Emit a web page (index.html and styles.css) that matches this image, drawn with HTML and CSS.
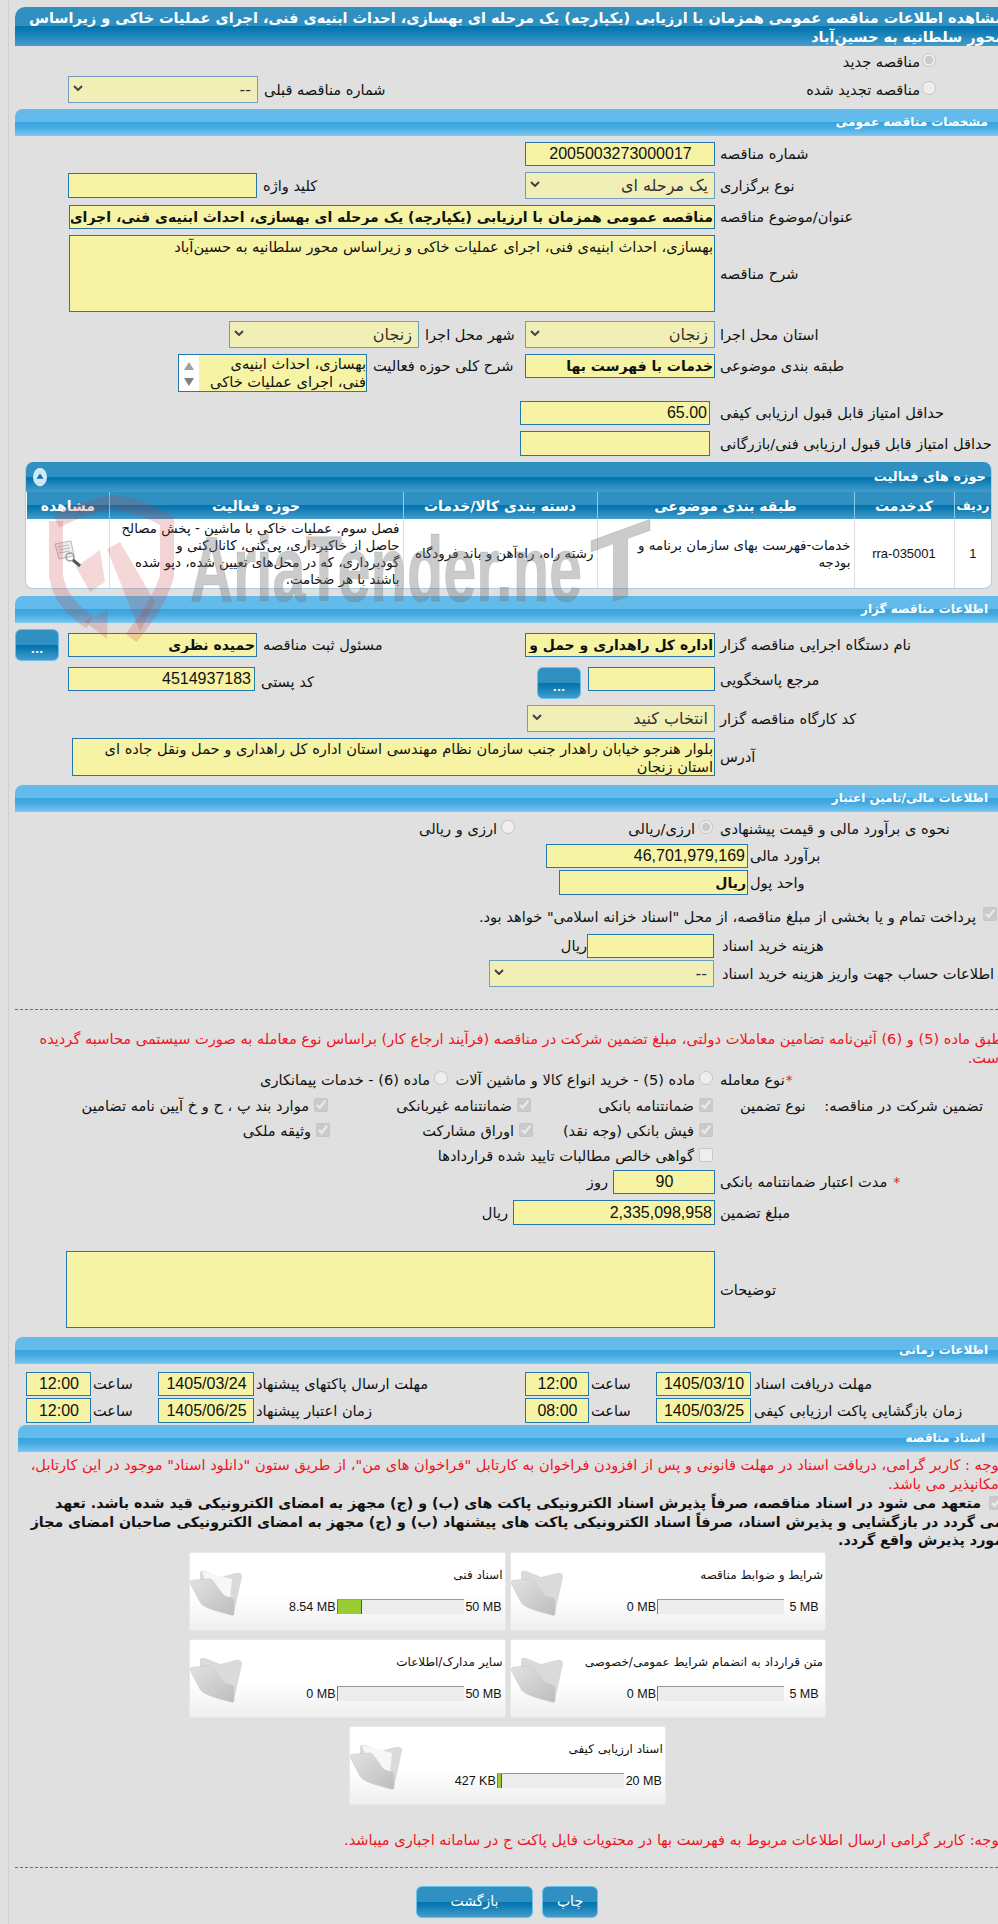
FILE: index.html
```html
<!DOCTYPE html>
<html lang="fa" dir="rtl">
<head>
<meta charset="utf-8">
<title>مشاهده اطلاعات مناقصه</title>
<link rel="stylesheet" href="styles.css">
</head>
<body>
<div class="rail"></div>
<main class="page">
  <h1 class="title">مشاهده اطلاعات مناقصه عمومی همزمان با ارزیابی (یکپارچه) یک مرحله ای بهسازی، احداث ابنیه‌ی فنی، اجرای عملیات خاکی و زیراساس محور سلطانیه به حسین‌آباد</h1>

  <div class="row h20 mt6 radio-row"><input class="rd" type="radio" name="a" checked disabled><span>مناقصه جدید</span></div>
  <div class="row h27 mt4 radio-row"><input class="rd up" type="radio" name="a" disabled><span>مناقصه تجدید شده</span>
    <div class="pair ml53"><span class="t2">شماره مناقصه قبلی</span><div class="sel w190"><select disabled><option>--</option></select><svg viewBox="0 0 10 6"><path d="M1 1l4 4 4-4" fill="none" stroke="#444" stroke-width="2"/></svg></div></div>
  </div>

  <h2 class="sec mt6">مشخصات مناقصه عمومی</h2>
  <div class="row mt6"><label class="lab">شماره مناقصه</label><input class="in w190 h24 num ctr" value="2005003273000017" readonly></div>
  <div class="row mt6 h27"><label class="lab">نوع برگزاری</label><div class="sel w190"><select disabled><option>یک مرحله ای</option></select><svg viewBox="0 0 10 6"><path d="M1 1l4 4 4-4" fill="none" stroke="#444" stroke-width="2"/></svg></div>
    <div class="pair ml53"><span class="t2">کلید واژه</span><input class="in w189 h25" readonly></div></div>
  <div class="row mt6"><label class="lab">عنوان/موضوع مناقصه</label><input class="in w646 h24 strong" value="مناقصه عمومی همزمان با ارزیابی (یکپارچه) یک مرحله ای بهسازی، احداث ابنیه‌ی فنی، اجرای عملیات خاکی و زیراساس محور سلطانیه به حسین‌آباد" readonly></div>
  <div class="row mt6 h77"><label class="lab">شرح مناقصه</label><textarea class="in w646 h77 ta" readonly>بهسازی، احداث ابنیه‌ی فنی، اجرای عملیات خاکی و زیراساس محور سلطانیه به حسین‌آباد</textarea></div>
  <div class="row mt9 h27"><label class="lab">استان محل اجرا</label><div class="sel w190"><select disabled><option>زنجان</option></select><svg viewBox="0 0 10 6"><path d="M1 1l4 4 4-4" fill="none" stroke="#444" stroke-width="2"/></svg></div>
    <div class="pair ml214"><span class="t2">شهر محل اجرا</span><div class="sel w190"><select disabled><option>زنجان</option></select><svg viewBox="0 0 10 6"><path d="M1 1l4 4 4-4" fill="none" stroke="#444" stroke-width="2"/></svg></div></div></div>
  <div class="row mt6 h38 top"><label class="lab lab-top">طبقه بندی موضوعی</label><input class="in w190 h24 strong" value="خدمات با فهرست بها" readonly>
    <div class="pair ml163 top"><span class="t2 lab-top">شرح کلی حوزه فعالیت</span>
      <div class="list"><div class="list-text">بهسازی، احداث ابنیه‌ی فنی، اجرای عملیات خاکی و زیراساس محور سلطانیه</div><div class="list-bar"><svg viewBox="0 0 10 8"><path d="M5 0l5 8H0z" fill="#a0a0a0"/></svg><svg viewBox="0 0 10 8"><path d="M5 8L0 0h10z" fill="#808080"/></svg></div></div></div></div>
  <div class="row mt9"><label class="lab lab-q">حداقل امتیاز قابل قبول ارزیابی کیفی</label><input class="in w190 h24 num" value="65.00" readonly></div>
  <div class="row mt6"><label class="lab lab-q">حداقل امتیاز قابل قبول ارزیابی فنی/بازرگانی</label><input class="in w190 h25" readonly></div>

  <section class="panel">
    <div class="panel-head"><span>حوزه های فعالیت</span><svg class="collapse" viewBox="0 0 16 22"><ellipse cx="8" cy="11" rx="8" ry="10.5" fill="#cfe6f3"/><path d="M8 7l4 6H4z" fill="#0a6ea8"/></svg></div>
    <table class="grid">
      <colgroup><col class="c37"><col class="c100"><col class="c257"><col class="c194"><col class="c294"><col class="c82"></colgroup>
      <thead><tr><th class="th-sm">ردیف</th><th>کدخدمت</th><th>طبقه بندی موضوعی</th><th>دسته بندی کالا/خدمات</th><th>حوزه فعالیت</th><th>مشاهده</th></tr></thead>
      <tbody><tr>
        <td class="ctr lat">1</td>
        <td class="ctr lat">rra-035001</td>
        <td class="td-wrap">خدمات-فهرست بهای سازمان برنامه و بودجه</td>
        <td>رشته راه، راه‌آهن و باند فرودگاه</td>
        <td>فصل سوم. عملیات خاکی با ماشین - پخش مصالح حاصل از خاکبرداری، پی‌کنی، کانال‌کنی و گودبرداری، که در محل‌های تعیین شده، دپو شده باشند با هر ضخامت.</td>
        <td class="ctr"><svg class="view" viewBox="0 0 30 28"><path d="M2 4l16-3 3 15-15 3z" fill="#eee" stroke="#bbb"/><path d="M5 7l11-2M6 10l11-2M6 13l11-2" stroke="#bbb"/><circle cx="17" cy="17" r="4" fill="none" stroke="#999" stroke-width="1.5"/><path d="M20 20l7 6" stroke="#555" stroke-width="3"/></svg></td>
      </tr></tbody>
    </table>
  </section>

  <h2 class="sec mt7">اطلاعات مناقصه گزار</h2>
  <div class="row mt6 h32"><label class="lab">نام دستگاه اجرایی مناقصه گزار</label><input class="in w190 h24 strong" value="اداره کل راهداری و حمل و نقل جاده ای استان زنجان" readonly>
    <div class="pair ml0"><span class="t2">مسئول ثبت مناقصه</span><input class="in w189 h24 strong" value="حمیده نظری" readonly><button class="dots mr9" type="button">...</button></div></div>
  <div class="row mt6 h32 top"><label class="lab lab-r">مرجع پاسخگویی</label><input class="in w127 h24 m1" readonly><button class="dots mr7" type="button">...</button>
    <div class="pair ml53 top"><span class="t2 lab-p">کد پستی</span><input class="in w187 h24 num-s m4" value="4514937183" readonly></div></div>
  <div class="row mt6 h27"><label class="lab">کد کارگاه مناقصه گزار</label><div class="sel w188"><select disabled><option>انتخاب کنید</option></select><svg viewBox="0 0 10 6"><path d="M1 1l4 4 4-4" fill="none" stroke="#444" stroke-width="2"/></svg></div></div>
  <div class="row mt6 h38"><label class="lab">آدرس</label><textarea class="in w643 h38 ta2" readonly>بلوار هنرجو خیابان راهدار جنب سازمان نظام مهندسی استان اداره کل راهداری و حمل ونقل جاده ای استان زنجان</textarea></div>

  <h2 class="sec mt9">اطلاعات مالی/تامین اعتبار</h2>
  <div class="row mt8 h18"><label class="lab lab-w">نحوه ی برآورد مالی و قیمت پیشنهادی</label><input class="rd" type="radio" name="b" checked disabled><span class="t3">ارزی/ریالی</span>
    <div class="pair ml404"><input class="rd" type="radio" name="b" disabled><span class="t3">ارزی و ریالی</span></div></div>
  <div class="row mt6"><label class="lab lab-m">برآورد مالی</label><input class="in w202 h24 num" value="46,701,979,169" readonly></div>
  <div class="row mt2"><label class="lab lab-m">واحد پول</label><input class="in w189 h25 strong" value="ریال" readonly></div>
  <div class="row mt13 h18 chk-line"><input class="cb" type="checkbox" checked disabled><span>پرداخت تمام و یا بخشی از مبلغ مناقصه، از محل "اسناد خزانه اسلامی" خواهد بود.</span></div>
  <div class="row mt8"><label class="lab lab-h">هزینه خرید اسناد</label><input class="in w127 h24" readonly><span class="unit0">ریال</span></div>
  <div class="row mt2 h27"><label class="lab lab-h nowrap">اطلاعات حساب جهت واریز هزینه خرید اسناد</label><div class="sel w225"><select disabled><option>--</option></select><svg viewBox="0 0 10 6"><path d="M1 1l4 4 4-4" fill="none" stroke="#444" stroke-width="2"/></svg></div></div>

  <hr class="dash mt22">
  <p class="red mt19">طبق ماده (5) و (6) آئین‌نامه تضامین معاملات دولتی، مبلغ تضمین شرکت در مناقصه (فرآیند ارجاع کار) براساس نوع معامله به صورت سیستمی محاسبه گردیده است.</p>
  <div class="row mt4 h18"><label class="lab lab-w"><span class="star">*</span>نوع معامله</label><input class="rd" type="radio" name="c" disabled><span class="t3">ماده (5) - خرید انواع کالا و ماشین آلات</span>
    <div class="pair ml245"><input class="rd" type="radio" name="c" disabled><span class="t3">ماده (6) - خدمات پیمانکاری</span></div></div>
  <div class="row mt8 h18"><div class="lab lab-w g-a"><span>تضمین شرکت در مناقصه:</span><span>نوع تضمین</span></div>
    <div class="c1"><input class="cb" type="checkbox" checked disabled><span>ضمانتنامه بانکی</span></div>
    <div class="c2"><input class="cb" type="checkbox" checked disabled><span>ضمانتنامه غیربانکی</span></div>
    <div class="c3"><input class="cb" type="checkbox" checked disabled><span>موارد بند پ ، ح و خ آیین نامه تضامین</span></div></div>
  <div class="row mt7 h18"><div class="lab lab-w"></div>
    <div class="c1 c1b"><input class="cb" type="checkbox" checked disabled><span>فیش بانکی (وجه نقد)</span></div>
    <div class="c2"><input class="cb" type="checkbox" checked disabled><span>اوراق مشارکت</span></div>
    <div class="c3"><input class="cb" type="checkbox" checked disabled><span>وثیقه ملکی</span></div></div>
  <div class="row mt7 h18"><div class="lab lab-w"></div>
    <div class="c1 wide"><input class="cb" type="checkbox" disabled><span>گواهی خالص مطالبات تایید شده قراردادها</span></div></div>
  <div class="row mt5"><label class="lab"><span class="star s2">*</span>مدت اعتبار ضمانتنامه بانکی</label><input class="in w102 h24 num ctr" value="90" readonly><span class="unit">روز</span></div>
  <div class="row mt6"><label class="lab">مبلغ تضمین</label><input class="in w202 h25 num" value="2,335,098,958" readonly><span class="unit">ریال</span></div>
  <div class="row mt26 h77"><label class="lab">توضیحات</label><textarea class="in w649 h77" readonly></textarea></div>

  <h2 class="sec mt9">اطلاعات زمانی</h2>
  <div class="row mt8"><label class="lab lab-t">مهلت دریافت اسناد</label><input class="in w95 h24 num date" value="1405/03/10" readonly><span class="sa">ساعت</span><input class="in w64 h24 num ctr" value="12:00" readonly>
    <div class="pair ml11"><span class="lab2">مهلت ارسال پاکتهای پیشنهاد</span><input class="in w96 h24 num date" value="1405/03/24" readonly><span class="sa">ساعت</span><input class="in w65 h24 num ctr" value="12:00" readonly></div></div>
  <div class="row mt2"><label class="lab lab-t">زمان بازگشایی پاکت ارزیابی کیفی</label><input class="in w95 h25 num date" value="1405/03/25" readonly><span class="sa">ساعت</span><input class="in w64 h25 num ctr" value="08:00" readonly>
    <div class="pair ml11"><span class="lab2">زمان اعتبار پیشنهاد</span><input class="in w96 h25 num date" value="1405/06/25" readonly><span class="sa">ساعت</span><input class="in w65 h25 num ctr" value="12:00" readonly></div></div>

  <h2 class="sec sec-docs mt2">اسناد مناقصه</h2>
  <p class="red red-docs mt3">توجه : کاربر گرامی، دریافت اسناد در مهلت قانونی و پس از افزودن فراخوان به کارتابل "فراخوان های من"، از طریق ستون "دانلود اسناد" موجود در این کارتابل، امکانپذیر می باشد.</p>
  <p class="pledge"><input class="cb" type="checkbox" checked disabled> متعهد می شود در اسناد مناقصه، صرفاً پذیرش اسناد الکترونیکی پاکت های (ب) و (ج) مجهز به امضای الکترونیکی قید شده باشد. تعهد<br>می گردد در بازگشایی و پذیرش اسناد، صرفاً اسناد الکترونیکی پاکت های پیشنهاد (ب) و (ج) مجهز به امضای الکترونیکی صاحبان امضای مجاز<br>مورد پذیرش واقع گردد.</p>

  <div class="cards">
    <article class="card"><div class="card-main"><div class="card-title">شرایط و ضوابط مناقصه</div><div class="meter"><span class="max">5 MB</span><div class="bar"></div><span class="cur">0 MB</span></div></div><svg class="folder" viewBox="0 0 54 48"><defs><linearGradient id="fg" x1="0" y1="0" x2="1" y2="1"><stop offset="0" stop-color="#e2e2e2"/><stop offset="1" stop-color="#bdbdbd"/></linearGradient></defs><path class="f-back" d="M10 3Q12 1 15 2L30 8 46 4Q52 3 52 8L44 44 10 22Z"/><path class="f-front" d="M0 14Q0 11 4 11L20 10Q22 10 24 13L34 27 42 29Q44 30 44 33L44 45Q44 47 41 46L30 43Q12 38 10 33Z"/></svg></article>
    <article class="card"><div class="card-main"><div class="card-title">اسناد فنی</div><div class="meter"><span class="max">50 MB</span><div class="bar"><i class="fill f-a"></i></div><span class="cur">8.54 MB</span></div></div><svg class="folder" viewBox="0 0 54 48"><path class="f-back" d="M10 3Q12 1 15 2L30 8 46 4Q52 3 52 8L44 44 10 22Z"/><path class="f-paper" d="M12 2L42 10 40 30 16 14Z"/><path class="f-front" d="M0 14Q0 11 4 11L20 10Q22 10 24 13L34 27 42 29Q44 30 44 33L44 45Q44 47 41 46L30 43Q12 38 10 33Z"/></svg></article>
    <article class="card"><div class="card-main"><div class="card-title">متن قرارداد به انضمام شرایط عمومی/خصوصی</div><div class="meter"><span class="max">5 MB</span><div class="bar"></div><span class="cur">0 MB</span></div></div><svg class="folder" viewBox="0 0 54 48"><path class="f-back" d="M10 3Q12 1 15 2L30 8 46 4Q52 3 52 8L44 44 10 22Z"/><path class="f-front" d="M0 14Q0 11 4 11L20 10Q22 10 24 13L34 27 42 29Q44 30 44 33L44 45Q44 47 41 46L30 43Q12 38 10 33Z"/></svg></article>
    <article class="card"><div class="card-main"><div class="card-title">سایر مدارک/اطلاعات</div><div class="meter"><span class="max">50 MB</span><div class="bar"></div><span class="cur">0 MB</span></div></div><svg class="folder" viewBox="0 0 54 48"><path class="f-back" d="M10 3Q12 1 15 2L30 8 46 4Q52 3 52 8L44 44 10 22Z"/><path class="f-front" d="M0 14Q0 11 4 11L20 10Q22 10 24 13L34 27 42 29Q44 30 44 33L44 45Q44 47 41 46L30 43Q12 38 10 33Z"/></svg></article>
    <article class="card"><div class="card-main"><div class="card-title">اسناد ارزیابی کیفی</div><div class="meter"><span class="max">20 MB</span><div class="bar"><i class="fill f-b"></i></div><span class="cur">427 KB</span></div></div><svg class="folder" viewBox="0 0 54 48"><path class="f-back" d="M10 3Q12 1 15 2L30 8 46 4Q52 3 52 8L44 44 10 22Z"/><path class="f-paper" d="M12 2L42 10 40 30 16 14Z"/><path class="f-front" d="M0 14Q0 11 4 11L20 10Q22 10 24 13L34 27 42 29Q44 30 44 33L44 45Q44 47 41 46L30 43Q12 38 10 33Z"/></svg></article>
  </div>

  <p class="red note">توجه: کاربر گرامی ارسال اطلاعات مربوط به فهرست بها در محتویات فایل پاکت ج در سامانه اجباری میباشد.</p>
  <hr class="dash mt18">
  <div class="actions"><button class="act a-print" type="button">چاپ</button><button class="act a-back" type="button">بازگشت</button></div>
</main>

<svg class="mark" viewBox="0 0 700 160" aria-hidden="true">
  <g fill="none" stroke="#c83c3c" stroke-opacity=".22" stroke-width="14"><path d="M56 26C80 14 96 10 113 7c20 3 36 8 54 19v55c-6 22-20 42-36 62"/><path d="M56 26v55c3 18 14 34 34 46"/></g>
  <path d="M84 126l24-10-1 28z" fill="#c83c3c" fill-opacity=".22"/>
  <path d="M76 72l24-17 5 32-15 10zM107 54l13-7 35 60-15 30z" fill="#c83c3c" fill-opacity=".2"/>
  <text class="mark-text" x="190" y="106" textLength="392" lengthAdjust="spacingAndGlyphs">AriaTender.ne</text>
  <text class="mark-text mark-t" transform="translate(590 115) skewY(-20)">T</text>
</svg>
</body>
</html>
```
FILE: styles.css
```css
*{box-sizing:border-box}
html,body{margin:0;padding:0}
body{width:998px;overflow-x:hidden;background:#e0e0e0;color:#111;font:14.6px/18px "DejaVu Sans",sans-serif;position:relative;padding-top:7px;height:1924px;overflow-y:hidden}
.rail{position:absolute;left:8px;top:0;bottom:0;width:1px;background:#cfcfcf}
.page{width:983px;margin-left:15px;direction:rtl}
h1,h2,p{margin:0;font-weight:normal}
.title{height:39px;margin-right:-6px;padding:2px 0 0 10px;border-top-left-radius:10px;color:#fff;font:bold 14.45px/19px "DejaVu Sans",sans-serif;background:linear-gradient(#2f90c1 0,#2f90c1 50%,#0274ae 50%,#0b7ab2 60%,#449ccb 100%)}
.sec{height:27px;padding-right:10px;border-top-left-radius:8px;color:#fff;font:bold 12px/27px "DejaVu Sans",sans-serif;background:linear-gradient(#62bbea 0,#62bbea 48%,#38a3dd 50%,#45a9e0 70%,#72c4ee 100%);border-bottom:1px solid #7ccaf0}
.sec-docs{margin-left:3px;padding-right:13px}
.row{display:flex;align-items:center;direction:rtl}
.row.top,.pair.top{align-items:flex-start}
.pair{display:flex;align-items:center;margin-right:auto}
.mt2{margin-top:2px}.mt3{margin-top:3px}.mt4{margin-top:4px}.mt5{margin-top:5px}.mt6{margin-top:6px}.mt7{margin-top:7px}.mt8{margin-top:8px}.mt9{margin-top:9px}.mt13{margin-top:13px}.mt18{margin-top:18px}.mt19{margin-top:19px}.mt22{margin-top:22px}.mt26{margin-top:26px}
.m1{margin-top:1px}.m4{margin-top:4px}
.mr7{margin-right:7px}.mr9{margin-right:9px}
.ml0{margin-left:0}.ml11{margin-left:11px}.ml53{margin-left:53px}.ml163{margin-left:163px}.ml214{margin-left:214px}.ml245{margin-left:245px}.ml404{margin-left:404px}
.h18{height:18px}.h20{height:20px}.h24{height:24px}.h25{height:25px}.h27{height:27px}.h32{height:32px}.h38{height:38px}.h77{height:77px}
.w64{width:64px}.w65{width:65px}.w95{width:95px}.w96{width:96px}.w102{width:102px}.w127{width:127px}.w187{width:187px}.w188{width:188px}.w189{width:189px}.w190{width:190px}.w202{width:202px}.w225{width:225px}.w643{width:643px}.w646{width:646px}.w649{width:649px}
.lab{flex:0 0 278px;margin-left:5px;text-align:left;white-space:nowrap}
.lab-top{margin-top:3px}
.lab-r{margin-top:4px}.lab-p{margin-top:6px}
.lab-q{margin-left:10px}
.lab-w{margin-left:7px}
.lab-m{flex-basis:248px;margin-left:2px}
.lab-h{flex-basis:276px;margin-left:8px}
.lab-t{flex-basis:244px;margin-left:3px}
.lab2{margin-left:2px;white-space:nowrap}
.t2{margin-left:6px;white-space:nowrap}
.t3{margin-right:4px;white-space:nowrap}
.radio-row>span{margin-right:2px}
.radio-row>.rd{margin-right:62px}
.rd{flex:none;width:14px;height:14px;margin:-4px 0 0}
.rd.up{margin-top:-3px}
.cb{flex:none;width:14px;height:14px;margin:-3px 0 0 5px}
.in{display:block;flex:none;margin:0;padding:0 1px;border:1px solid #2478ae;border-radius:0;background:#f6f4a4;color:#111;font:14.6px/22px "DejaVu Sans",sans-serif;direction:rtl;outline:0}
.num{font:16px "Liberation Sans",sans-serif;text-align:right;direction:rtl;padding-left:3px;padding-right:2px}
.num-s{font:16px "Liberation Sans",sans-serif;padding-right:3px}
.date{text-align:center}
.ctr{text-align:center}
input.ctr{text-align:center}
.strong{font:bold 14px "DejaVu Sans",sans-serif}
.ta{font:14.6px/18px "DejaVu Sans",sans-serif;resize:none;padding:2px 1px;overflow:hidden}
.ta2{font:14.6px/18px "DejaVu Sans",sans-serif;resize:none;padding:1px;overflow:hidden}
textarea.in{resize:none;overflow:hidden}
.sel{position:relative;flex:none;height:27px}
.sel select{display:block;width:100%;height:100%;margin:0;padding:0 6px 0 20px;border:1px solid #6d9fc0;border-radius:0;appearance:none;-webkit-appearance:none;background:#f1efb6;color:#333;opacity:1;font:16px "DejaVu Sans",sans-serif;direction:rtl}
.sel svg{position:absolute;left:5px;top:9px;width:10px;height:6px}
.list{flex:none;display:flex;width:189px;height:38px;border:1px solid #2478ae;background:#f6f4a4;overflow:hidden}
.list-text{flex:1;padding:0 0 0 2px;font:14.6px/18px "DejaVu Sans",sans-serif;overflow:hidden}
.list-bar{flex:none;width:20px;background:#fff;display:flex;flex-direction:column;justify-content:space-between;align-items:center;padding:7px 0 5px}
.list-bar svg{width:10px;height:8px}
.panel{width:967px;margin:6px 6px 0 10px;height:127px;border:1px solid #a9cfe4;border-top:0;border-radius:8px;background:#fff;overflow:hidden}
.panel-head{display:flex;align-items:center;justify-content:space-between;height:30px;padding:0 5px 0 7px;color:#fff;font:bold 13px/30px "DejaVu Sans",sans-serif;background:linear-gradient(#2f90c1 0,#2f90c1 50%,#0274ae 50%,#0b7ab2 60%,#449ccb 100%)}
.collapse{width:14px;height:20px}
.grid{width:964px;margin-left:3px;margin-right:0;border-collapse:collapse;table-layout:fixed;direction:rtl}
.c37{width:37px}.c100{width:100px}.c257{width:257px}.c194{width:194px}.c294{width:294px}.c82{width:82px}
.grid th{height:27px;padding:0;border-right:1px solid #8ccbea;color:#fff;font:bold 14px "DejaVu Sans",sans-serif;white-space:nowrap;background:linear-gradient(#2f90c1 0,#2f90c1 50%,#0274ae 50%,#0b7ab2 60%,#449ccb 100%)}
.grid th:first-child{border-right:0}
.grid th.th-sm{font-size:12.5px}
.grid td{height:69px;padding:0 3px;border-right:1px solid #ddd;font:13.4px/17px "DejaVu Sans",sans-serif;vertical-align:middle;text-align:right}
.grid td:first-child{border-right:0}
.grid td.ctr{text-align:center}
.grid td.lat{font:13px "Liberation Sans",sans-serif}
.grid td.td-wrap{padding-left:24px}
.view{display:block;margin:0 auto;width:30px;height:28px}
.dots{flex:none;width:44px;height:32px;padding:10px 0 0;border:1px solid #6cc0ea;border-radius:6px;color:#fff;font:bold 11px/16px "DejaVu Sans",sans-serif;background:linear-gradient(#2f90c1 0,#2f90c1 50%,#0274ae 50%,#0b7ab2 60%,#449ccb 100%)}
.chk-line{padding-right:1px}
.chk-line .cb{margin:-6px 0 0 7px}
.unit0{margin-left:0}
.unit{margin-right:5px}
.nowrap{white-space:nowrap}
.dash{height:0;margin-bottom:0;margin-left:0;margin-right:0;border:0;border-top:1px dashed #2e7fae}
.red{color:#f0141e;line-height:19px;margin-left:0;margin-right:-5px}
.star{color:#f0141e;font-size:14px;margin-left:1px}
.s2{margin-left:6px}
.g-a{display:flex;justify-content:space-between;padding:0 15px 0 20px;text-align:right}
.c1,.c2,.c3{display:flex;align-items:center;white-space:nowrap;flex:none}
.c1{width:182px}.c1b{width:180px}.c2{width:203px}.c3{width:auto}
.wide{width:auto}
.sa{flex:none;width:65px;text-align:left;margin-left:2px}
.pledge{margin:1px -5px 0 0;font:bold 14.2px/18.5px "DejaVu Sans",sans-serif;height:56px}
.pledge .cb{margin:0 0 0 3px;vertical-align:-2px}
.cards{display:flex;flex-wrap:wrap;justify-content:center;gap:8px 4px;width:637px;margin:2px 172px 0 0}
.card{display:flex;width:316.5px;height:79px;border:1px solid #e8e8e8;border-radius:2px;background:linear-gradient(#fff 0,#fff 55%,#efefef 100%)}
.card-main{flex:1;padding:0 1px 0 0}
.card-title{height:46px;padding:13px 1px 0 0;font-size:12px;line-height:18px;white-space:nowrap}
.meter{display:flex;align-items:center;height:15px;font:12.5px "Liberation Sans",sans-serif}
.max{flex:none;width:40px;text-align:center;direction:ltr}
.bar{flex:none;position:relative;width:127px;height:15px;background:#ececec;border-top:1px solid #999}
.bar::after{content:"";position:absolute;left:0;top:0;bottom:0;width:1px;background:#777}
.fill{position:absolute;left:0;top:0;bottom:0;background:#9acd32;border-right:1px solid #555}
.f-a{width:25px}.f-b{width:5px}
.cur{flex:none;margin-right:1px;direction:ltr;white-space:nowrap}
.folder{flex:none;align-self:flex-start;width:54px;height:48px;margin:16px 3px 0 0}
.f-back{fill:#dadada}
.f-paper{fill:#f7f7f7}
.f-front{fill:url(#fg);stroke:#c4c4c4;stroke-width:.5}
.note{margin-top:25px}
.actions{display:flex;gap:9px;margin:18px 400px 0 0}
.act{flex:none;height:32px;padding:0 0 2px;border:1px solid #6cc0ea;border-radius:6px;color:#fff;font:14px "DejaVu Sans",sans-serif;background:linear-gradient(#2f90c1 0,#2f90c1 50%,#0274ae 50%,#0b7ab2 60%,#449ccb 100%)}
.a-print{width:56px}.a-back{width:117px}
.mark{position:absolute;left:0;top:495px;width:700px;height:160px;pointer-events:none;direction:ltr}
.mark-text{font:bold 92px "Liberation Sans",sans-serif;fill:#777;fill-opacity:.38;stroke:#777;stroke-opacity:.2;stroke-width:1;direction:ltr}
.mark-t{font-size:100px}
```
